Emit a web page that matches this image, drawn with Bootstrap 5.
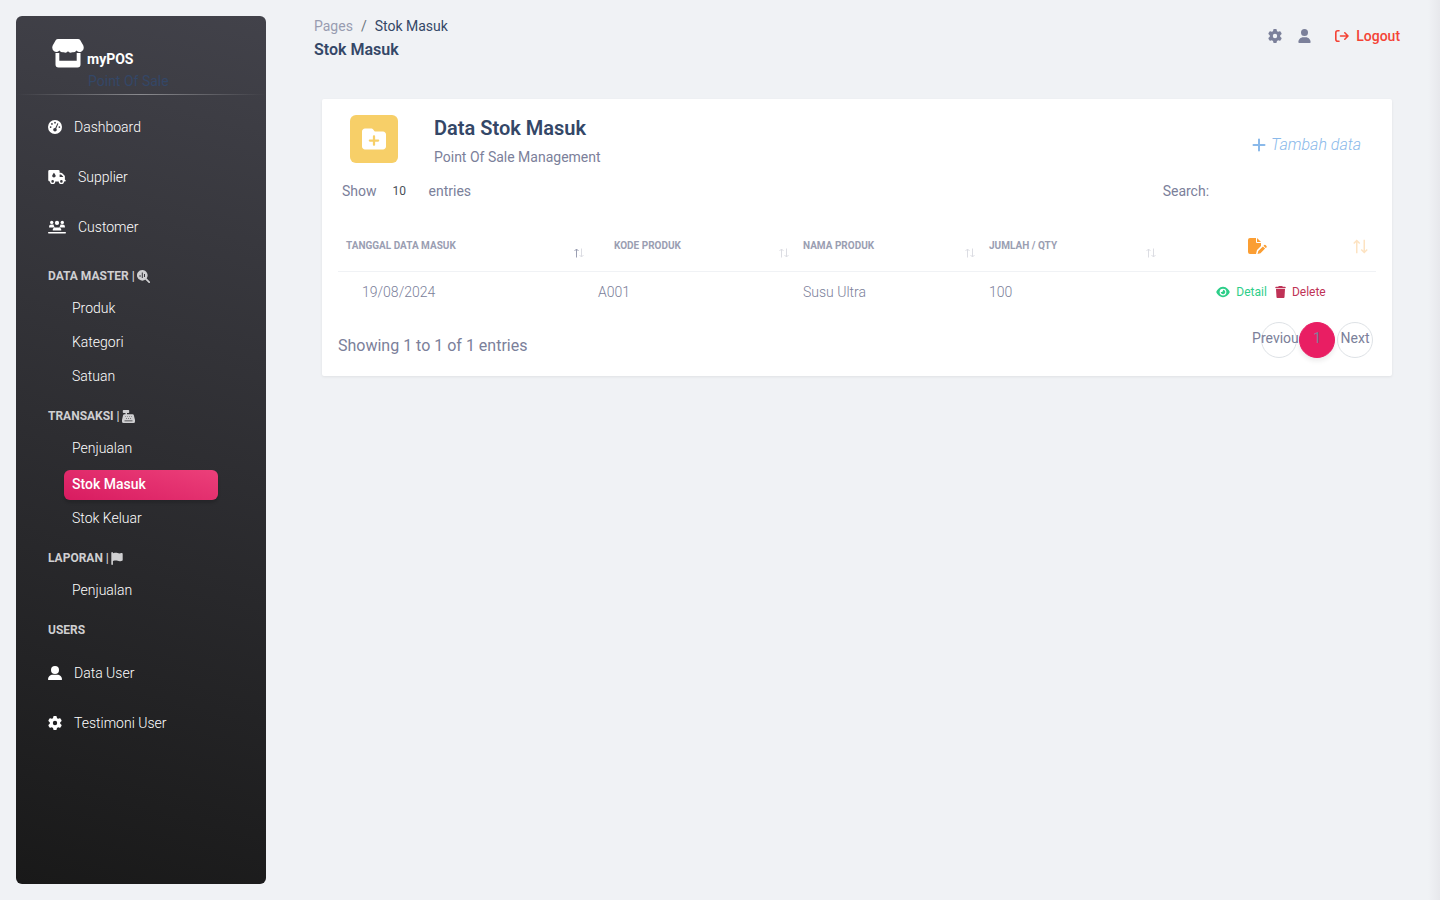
<!DOCTYPE html>
<html lang="id">
<head>
<meta charset="utf-8">
<meta name="viewport" content="width=device-width, initial-scale=1">
<title>Stok Masuk - myPOS</title>
<link href="https://cdn.jsdelivr.net/npm/bootstrap@5.3.0/dist/css/bootstrap.min.css" rel="stylesheet">
<style>
body{font-family:Roboto,"Liberation Sans",sans-serif;font-size:14px;line-height:20px;color:#7b809a;background:linear-gradient(to left,#e7e8ec,#f0f2f5 12px) #f0f2f5}
a{text-decoration:none;color:inherit}
svg{fill:currentColor;flex:none;display:block}
.sidebar{width:250px;min-height:calc(100vh - 32px);background:linear-gradient(195deg,#42424a,#191919);border-radius:6px;color:#fff}
.brand{height:78px;padding:22px 0 0 36px}
.brand-link{gap:3px}
.brand-name{font-weight:700;line-height:20px;padding-top:11px}
.brand-sub{line-height:24px;color:#344767;padding-left:36px}
.divider{height:1px;background:linear-gradient(90deg,transparent,rgba(255,255,255,.4),transparent)}
.side-nav{padding-top:7px}
.side-link{height:50px;padding:0 32px;font-weight:300;gap:12px;color:#fff}
.side-head{height:20px;margin:14px 0 8px 32px;font-size:12px;font-weight:700;color:#cfcfd1;gap:2px}
.side-sub{height:30px;margin:0 48px 4px;padding:0 8px 2px;border-radius:6px;font-weight:300;color:#fff}
.side-sub.current{margin-top:6px;font-weight:500;background:linear-gradient(195deg,#ec407a,#d81b60);box-shadow:0 3px 3px rgba(0,0,0,.15)}
.topbar{padding:16px 40px 0 48px;min-height:99px}
.tools{padding-top:10px}
.crumb{--bs-breadcrumb-divider-color:#6c757d;--bs-breadcrumb-item-padding-x:8px;--bs-breadcrumb-item-active-color:#344767}
.page-title{font-size:16px;line-height:28px;font-weight:600;color:#344767}
.logout{color:#f44335;font-weight:500;gap:7px}
.panel{margin:0 48px 48px 56px;border-radius:2px;background:#fff;box-shadow:0 1px 3px rgba(0,0,0,.07)}
.tile{width:48px;height:48px;margin:0 36px 0 12px;border-radius:6px;background:#f7cf68;color:#fff}
.panel h1{font-size:20px;line-height:26px;margin-bottom:6px;font-weight:600;color:#344767}
.add-link{font-size:16px;font-weight:300;font-style:italic;color:#8ab9ea;gap:5px;margin:20px 15px 0 0}
.filters{padding:14px 4px 0}
.plain-box{border:0;background:transparent;outline:0;color:#495057;font-size:12px;appearance:none}
.len-box{width:52px}
.find-box{width:155px}
.stock{table-layout:fixed;width:100%;margin-top:22px}
.stock th{height:48px;padding:13px 6px 0 8px;vertical-align:top;font-size:10px;line-height:20px;color:#9a9eb2;font-weight:700;border-bottom:1px solid #f0f2f5}
.stock .edit-head{padding-top:15px}
.stock td{padding:10px 8px 12px;font-weight:300;color:#7b809a}
.col-date{width:252px}.col-code{width:205px}.col-name{width:186px}.col-qty{width:181px}.col-act{width:214px}
.sorter{margin-top:12px;color:#dcdde3}
.sorter.asc{--up:#9a9eb2}
.edit-mark{color:#fb9e33}
.sorter-lg{color:#fde3c2}
.row-act{border:0;padding:0;background:none;font-size:12px;gap:6px}
.row-act.view{color:#2dce89}
.row-act.drop{color:#bf3256}
.table-foot{padding-top:8px}
.entry-count{font-size:16px;padding-top:14px}
.pager{gap:2px;margin:0 3px 2px 0}
.pager .page-item .page-link{width:36px;height:36px;margin:0;padding:0 0 4px;border:1px solid #dee2e6;border-radius:50%;color:#7b809a;background:none;font-size:14px;white-space:nowrap}
.pager .page-item.active .page-link{background:#e91e63;border-color:#e91e63;position:relative;z-index:2;box-shadow:0 3px 5px rgba(0,0,0,.08)}
</style>
</head>
<body>
<svg width="0" height="0" class="position-absolute" aria-hidden="true"><defs>
<symbol id="gear" viewBox="0 0 512 512"><path d="M495.9 166.6c3.2 8.7 .5 18.4-6.4 24.6l-43.3 39.4c1.1 8.3 1.7 16.8 1.7 25.4s-.6 17.1-1.7 25.4l43.3 39.4c6.9 6.2 9.6 15.9 6.4 24.6c-4.4 11.9-9.7 23.3-15.8 34.3l-4.7 8.1c-6.6 11-14 21.4-22.1 31.2c-5.9 7.2-15.7 9.6-24.5 6.8l-55.7-17.7c-13.4 10.3-28.2 18.9-44 25.4l-12.5 57.1c-2 9.1-9 16.3-18.2 17.8c-13.8 2.3-28 3.5-42.5 3.5s-28.7-1.2-42.5-3.5c-9.2-1.5-16.2-8.7-18.2-17.8l-12.5-57.1c-15.8-6.5-30.6-15.1-44-25.4L83.1 425.9c-8.8 2.8-18.6 .3-24.5-6.8c-8.1-9.8-15.5-20.2-22.1-31.2l-4.7-8.1c-6.1-11-11.4-22.4-15.8-34.3c-3.2-8.7-.5-18.4 6.4-24.6l43.3-39.4C64.6 273.1 64 264.6 64 256s.6-17.1 1.7-25.4L22.4 191.2c-6.9-6.2-9.6-15.9-6.4-24.6c4.4-11.9 9.7-23.3 15.8-34.3l4.7-8.1c6.6-11 14-21.4 22.1-31.2c5.9-7.2 15.7-9.6 24.5-6.8l55.7 17.7c13.4-10.3 28.2-18.9 44-25.4l12.5-57.1c2-9.1 9-16.3 18.2-17.8C227.3 1.2 241.5 0 256 0s28.7 1.2 42.5 3.5c9.2 1.5 16.2 8.7 18.2 17.8l12.5 57.1c15.8 6.5 30.6 15.1 44 25.4l55.7-17.7c8.8-2.8 18.6-.3 24.5 6.8c8.1 9.8 15.5 20.2 22.1 31.2l4.7 8.1c6.1 11 11.4 22.4 15.8 34.3zM256 336a80 80 0 1 0 0-160 80 80 0 1 0 0 160z"/></symbol>
<symbol id="user" viewBox="0 0 448 512"><path d="M224 256A128 128 0 1 0 224 0a128 128 0 1 0 0 256zm-45.7 48C79.8 304 0 383.8 0 482.3C0 498.7 13.3 512 29.7 512H418.3c16.4 0 29.7-13.3 29.7-29.7C448 383.8 368.2 304 269.7 304H178.3z"/></symbol>
<symbol id="user-wide" viewBox="0 0 15 15"><circle cx="7.500" cy="4.300" r="4.300"/><path d="M0 14.500C0 11 2.500 9.300 5 9.300h5c2.500 0 5 1.700 5 5.200q0 .5-.5.5H.5q-.5 0-.5-.5z"/></symbol>
<symbol id="updown" viewBox="0 0 10 10"><path d="M2.500 9.500V1M.5 3l2-2 2 2" fill="none" stroke="var(--up,currentColor)"/><path d="M7.500.5V9M5.500 7l2 2 2-2" fill="none" stroke="currentColor"/></symbol>
</defs></svg>
<div class="d-flex">
<aside class="sidebar m-3 me-0 flex-shrink-0">
  <div class="brand">
    <a href="#" class="brand-link d-flex text-white">
      <svg width="32" height="31" viewBox="0 0 32 31"><path d="M6 1h20q1.500 0 2.300 1.200l3 5.300q1.500 4.500-2.100 6.200-2.800.9-4.600-1.300-1.900 2.200-4.300 1.800-2.700 1.200-4.300-.9-1.700 2.100-4.300.9-2.700.4-4.300-1.800-2.200 2.200-4.900 1.200-3.300-2-1.800-6.100l3-5.300Q4.500 1 6 1z"/><path d="M3.500 15h3.800v7.800h17.400V15h3.800v11.500q0 3-3 3h-19q-3 0-3-3z"/></svg>
      <span class="brand-name">myPOS</span>
    </a>
    <div class="brand-sub">Point Of Sale</div>
  </div>
  <div class="divider"></div>
  <nav class="side-nav">
    <a class="side-link d-flex align-items-center" href="#"><svg width="14" height="14" viewBox="0 0 512 512"><path fill-rule="evenodd" d="M0 256a256 256 0 1 1 512 0A256 256 0 1 1 0 256zM288 96a32 32 0 1 0-64 0 32 32 0 1 0 64 0zM256 416c35 0 64-29 64-64 0-17-7-33-18-45l75-166c7-16-27-32-35-16l-77 164c-52-6-73 30-73 63 0 35 29 64 64 64zM176 144a32 32 0 1 0-64 0 32 32 0 1 0 64 0zM96 288a32 32 0 1 0 0-64 32 32 0 1 0 0 64zM448 256a32 32 0 1 0-64 0 32 32 0 1 0 64 0z"/></svg>Dashboard</a>
    <a class="side-link d-flex align-items-center" href="#"><svg width="18" height="14" viewBox="0 0 640 512"><path fill-rule="evenodd" d="M48 0h320q48 0 48 48v48h50q27 0 45 19l83 83q14 14 14 35v119q32 0 32 32t-32 32h-32a96 96 0 0 1-192 0H256a96 96 0 0 1-192 0H48q-48 0-48-48V48Q0 0 48 0zm368 160v96h128v-19l-77-77zM160 464a48 48 0 1 0 0-96 48 48 0 1 0 0 96zm320 0a48 48 0 1 0 0-96 48 48 0 1 0 0 96zM208 272c39 0 64-29 64-60 0-32-35-80-64-116-29 36-64 84-64 116 0 31 25 60 64 60z"/></svg>Supplier</a>
    <a class="side-link d-flex align-items-center" href="#"><svg width="18" height="14" viewBox="0 0 18 14"><circle cx="3.700" cy="2.400" r="1.700"/><circle cx="9" cy="2.900" r="2.100"/><circle cx="14.300" cy="2.400" r="1.700"/><path d="M1 7q0-2.400 2.300-2.400H5.500Q6 7 7 7.500H1.500Q1 7.500 1 7zM17 7q0-2.400-2.300-2.400H12.500Q12 7 11 7.500h5.500q.5 0 .5-.5zM4.700 10q0-2.500 2.700-2.500h3.200q2.700 0 2.700 2.500 0 .5-.5.5H5.200q-.5 0-.5-.5zM.7 12h16.600q.7 0 .7.800t-.7.800H.7q-.7 0-.7-.8t.7-.8z"/></svg>Customer</a>

    <div class="side-head d-flex align-items-center">DATA MASTER | <svg width="13" height="13" viewBox="0 0 13 13"><path fill-rule="evenodd" d="M5.300 0a5.300 5.300 0 0 1 4.200 8.500l3.200 3.200q.3.500 0 .9-.5.4-.9 0L8.500 9.500A5.300 5.300 0 1 1 5.300 0zM2.600 5v2h.9V5zm2.200-2.500V8h1V2.500zM7 4v3h1V4z"/><path d="M9 9l3.200 3.200" stroke="currentColor" stroke-width="1.500" stroke-linecap="round"/></svg></div>
    <a class="side-sub d-flex align-items-center" href="#">Produk</a>
    <a class="side-sub d-flex align-items-center" href="#">Kategori</a>
    <a class="side-sub d-flex align-items-center" href="#">Satuan</a>

    <div class="side-head d-flex align-items-center">TRANSAKSI | <svg width="13" height="13" viewBox="0 0 13 13"><path fill-rule="evenodd" d="M1.500 0h5q.7 0 .7.7v1.600q0 .7-.7.7H5v1.200h5.500q1.200 0 1.400 1.200L13 10v1.500q0 1.500-1.500 1.500h-10Q0 13 0 11.500V10l1-4.600q.3-1.200 1.500-1.200h1V3h-2Q.8 3 .8 2.300V.7Q.8 0 1.500 0zM2.500 10.600v.7h8v-.7zM3 6.200v.6h.7v-.6zm2 0v.6h.7v-.6zm2 0v.6h.7v-.6zm2 0v.6h.7v-.6zM4 8.100v.6h.7v-.6zm2 0v.6h.7v-.6zm2 0v.6h.7v-.6z"/></svg></div>
    <a class="side-sub d-flex align-items-center" href="#">Penjualan</a>
    <a class="side-sub current d-flex align-items-center" href="#" aria-current="page">Stok Masuk</a>
    <a class="side-sub d-flex align-items-center" href="#">Stok Keluar</a>

    <div class="side-head d-flex align-items-center">LAPORAN | <svg width="12" height="13" viewBox="0 0 448 512"><path d="M64 32C64 14.300 49.700 0 32 0S0 14.300 0 32V480c0 17.700 14.300 32 32 32s32-14.300 32-32V352l64.300-16.100c41.100-10.300 84.600-5.500 122.500 13.400c44.200 22.100 95.500 24.800 141.700 7.400l34.700-13c12.500-4.700 20.800-16.600 20.800-30V66.100c0-23-24.200-38-44.800-27.700l-9.600 4.800c-46.300 23.200-100.800 23.200-147.100 0c-35.100-17.600-75.400-22-113.500-12.500L64 48V32z"/></svg></div>
    <a class="side-sub d-flex align-items-center" href="#">Penjualan</a>

    <div class="side-head d-flex align-items-center">USERS</div>
    <a class="side-link d-flex align-items-center" href="#"><svg width="14" height="14"><use href="#user-wide"/></svg>Data User</a>
    <a class="side-link d-flex align-items-center" href="#"><svg width="14" height="14"><use href="#gear"/></svg>Testimoni User</a>
  </nav>
</aside>

<main class="flex-grow-1">
  <header class="topbar d-flex justify-content-between align-items-start">
    <div>
      <nav aria-label="breadcrumb"><ol class="breadcrumb crumb mb-0">
        <li class="breadcrumb-item"><a class="opacity-75" href="#">Pages</a></li>
        <li class="breadcrumb-item active" aria-current="page">Stok Masuk</li>
      </ol></nav>
      <div class="page-title">Stok Masuk</div>
    </div>
    <div class="tools d-flex align-items-center">
      <a href="#" aria-label="Settings" class="me-3"><svg width="14" height="14"><use href="#gear"/></svg></a>
      <a href="#" aria-label="Profile" class="me-4"><svg width="13" height="14"><use href="#user"/></svg></a>
      <a href="#" class="logout d-flex align-items-center"><svg width="14" height="12" viewBox="0 0 14 12"><path d="M4 .8H2.800Q.8.800.8 2.800v6.400q0 2 2 2H4M5.500 6h7.500M9.800 2.800 13 6 9.800 9.200" fill="none" stroke="currentColor" stroke-width="1.600" stroke-linecap="round" stroke-linejoin="round"/></svg>Logout</a>
    </div>
  </header>

  <section class="panel p-3">
    <div class="d-flex justify-content-between">
      <div class="d-flex">
        <div class="tile d-flex align-items-center justify-content-center"><svg width="24" height="24" viewBox="0 0 512 512"><path d="M512 416c0 35.300-28.700 64-64 64H64c-35.300 0-64-28.700-64-64V96C0 60.700 28.700 32 64 32H192c20.100 0 39.100 9.500 51.200 25.600l19.200 25.600c6 8.100 15.500 12.800 25.600 12.800H448c35.300 0 64 28.700 64 64V416zM232 376c0 13.300 10.700 24 24 24s24-10.700 24-24V312h64c13.300 0 24-10.700 24-24s-10.700-24-24-24H280V200c0-13.300-10.700-24-24-24s-24 10.700-24 24v64H168c-13.300 0-24 10.700-24 24s10.700 24 24 24h64v64z"/></svg></div>
        <div><h1>Data Stok Masuk</h1><div>Point Of Sale Management</div></div>
      </div>
      <a href="#" class="add-link d-flex align-items-center align-self-start"><svg width="14" height="14" viewBox="0 0 14 14"><path d="M7 1.500v11M1.500 7h11" stroke="currentColor" stroke-width="2" stroke-linecap="round"/></svg>Tambah data</a>
    </div>

    <div class="filters d-flex justify-content-between">
      <div class="d-flex align-items-center"><label for="len">Show</label><select id="len" class="plain-box len-box py-0 ps-3"><option>10</option></select><label for="len">entries</label></div>
      <div class="d-flex"><label for="find">Search:</label><input id="find" type="search" class="plain-box find-box p-0 ms-2"></div>
    </div>

    <table class="stock">
      <colgroup><col class="col-date"><col class="col-code"><col class="col-name"><col class="col-qty"><col class="col-act"></colgroup>
      <thead><tr>
        <th><div class="d-flex justify-content-between">TANGGAL DATA MASUK<svg class="sorter asc" width="10" height="10"><use href="#updown"/></svg></div></th>
        <th class="ps-4"><div class="d-flex justify-content-between">KODE PRODUK<svg class="sorter" width="10" height="10"><use href="#updown"/></svg></div></th>
        <th><div class="d-flex justify-content-between">NAMA PRODUK<svg class="sorter" width="10" height="10"><use href="#updown"/></svg></div></th>
        <th><div class="d-flex justify-content-between">JUMLAH / QTY<svg class="sorter" width="10" height="10"><use href="#updown"/></svg></div></th>
        <th class="edit-head pe-2"><div class="d-flex align-items-center"><svg class="edit-mark mx-auto" width="19" height="16" viewBox="0 0 19 16"><path fill-rule="evenodd" d="M2 0h6v4q0 1 1 1h4v3L9 12l-1 4H2q-2 0-2-2V2Q0 0 2 0zM9 0l4 4H9z"/><path d="m9.500 16 .8-3 4.600-4.600 2.200 2.200-4.600 4.600zM15.500 7.800l.7-.7q.7-.5 1.300 0l1 1q.5.700 0 1.300l-.8.7z"/></svg><svg class="sorter-lg ms-2" width="15" height="15"><use href="#updown"/></svg></div></th>
      </tr></thead>
      <tbody><tr>
        <td class="ps-4">19/08/2024</td><td>A001</td><td>Susu Ultra</td><td>100</td>
        <td class="pe-1"><div class="d-flex justify-content-center gap-2">
          <button type="button" class="row-act view d-flex align-items-center"><svg width="14" height="12" viewBox="0 0 576 512"><path d="M288 32c-80.800 0-145.500 36.800-192.600 80.600C48.600 156 17.300 208 2.500 243.700c-3.300 7.900-3.300 16.700 0 24.600C17.300 304 48.600 356 95.400 399.400C142.500 443.200 207.200 480 288 480s145.500-36.800 192.600-80.600c46.800-43.500 78.100-95.400 93-131.100c3.300-7.900 3.300-16.700 0-24.600c-14.900-35.700-46.200-87.700-93-131.100C433.500 68.800 368.800 32 288 32zM144 256a144 144 0 1 1 288 0 144 144 0 1 1 -288 0zm144-64c0 35.300-28.700 64-64 64c-7.100 0-13.900-1.200-20.300-3.300c-5.500-1.800-11.900 1.600-11.700 7.400c.3 6.900 1.300 13.800 3.200 20.700c13.700 51.200 66.400 81.600 117.600 67.900s81.600-66.400 67.900-117.600c-11.100-41.500-47.800-69.400-88.600-71.100c-5.800-.2-9.200 6.100-7.400 11.700c2.100 6.400 3.300 13.200 3.300 20.300z"/></svg>Detail</button>
          <button type="button" class="row-act drop d-flex align-items-center"><svg width="11" height="12" viewBox="0 0 448 512"><path d="M135.200 17.700L128 32H32C14.300 32 0 46.300 0 64S14.300 96 32 96H416c17.700 0 32-14.300 32-32s-14.300-32-32-32H320l-7.200-14.300C307.400 6.800 296.300 0 284.200 0H163.800c-12.100 0-23.200 6.800-28.600 17.700zM416 128H32L53.200 467c1.600 25.300 22.600 45 47.900 45H346.900c25.300 0 46.300-19.700 47.900-45L416 128z"/></svg>Delete</button>
        </div></td>
      </tr></tbody>
    </table>

    <div class="table-foot d-flex justify-content-between align-items-start">
      <div class="entry-count">Showing 1 to 1 of 1 entries</div>
      <ul class="pagination pager">
        <li class="page-item"><a class="page-link d-flex align-items-center justify-content-center" href="#">Previous</a></li>
        <li class="page-item active"><a class="page-link d-flex align-items-center justify-content-center" href="#">1</a></li>
        <li class="page-item"><a class="page-link d-flex align-items-center justify-content-center" href="#">Next</a></li>
      </ul>
    </div>
  </section>
</main>
</div>
<script src="https://cdn.jsdelivr.net/npm/bootstrap@5.3.0/dist/js/bootstrap.bundle.min.js"></script>
</body>
</html>
